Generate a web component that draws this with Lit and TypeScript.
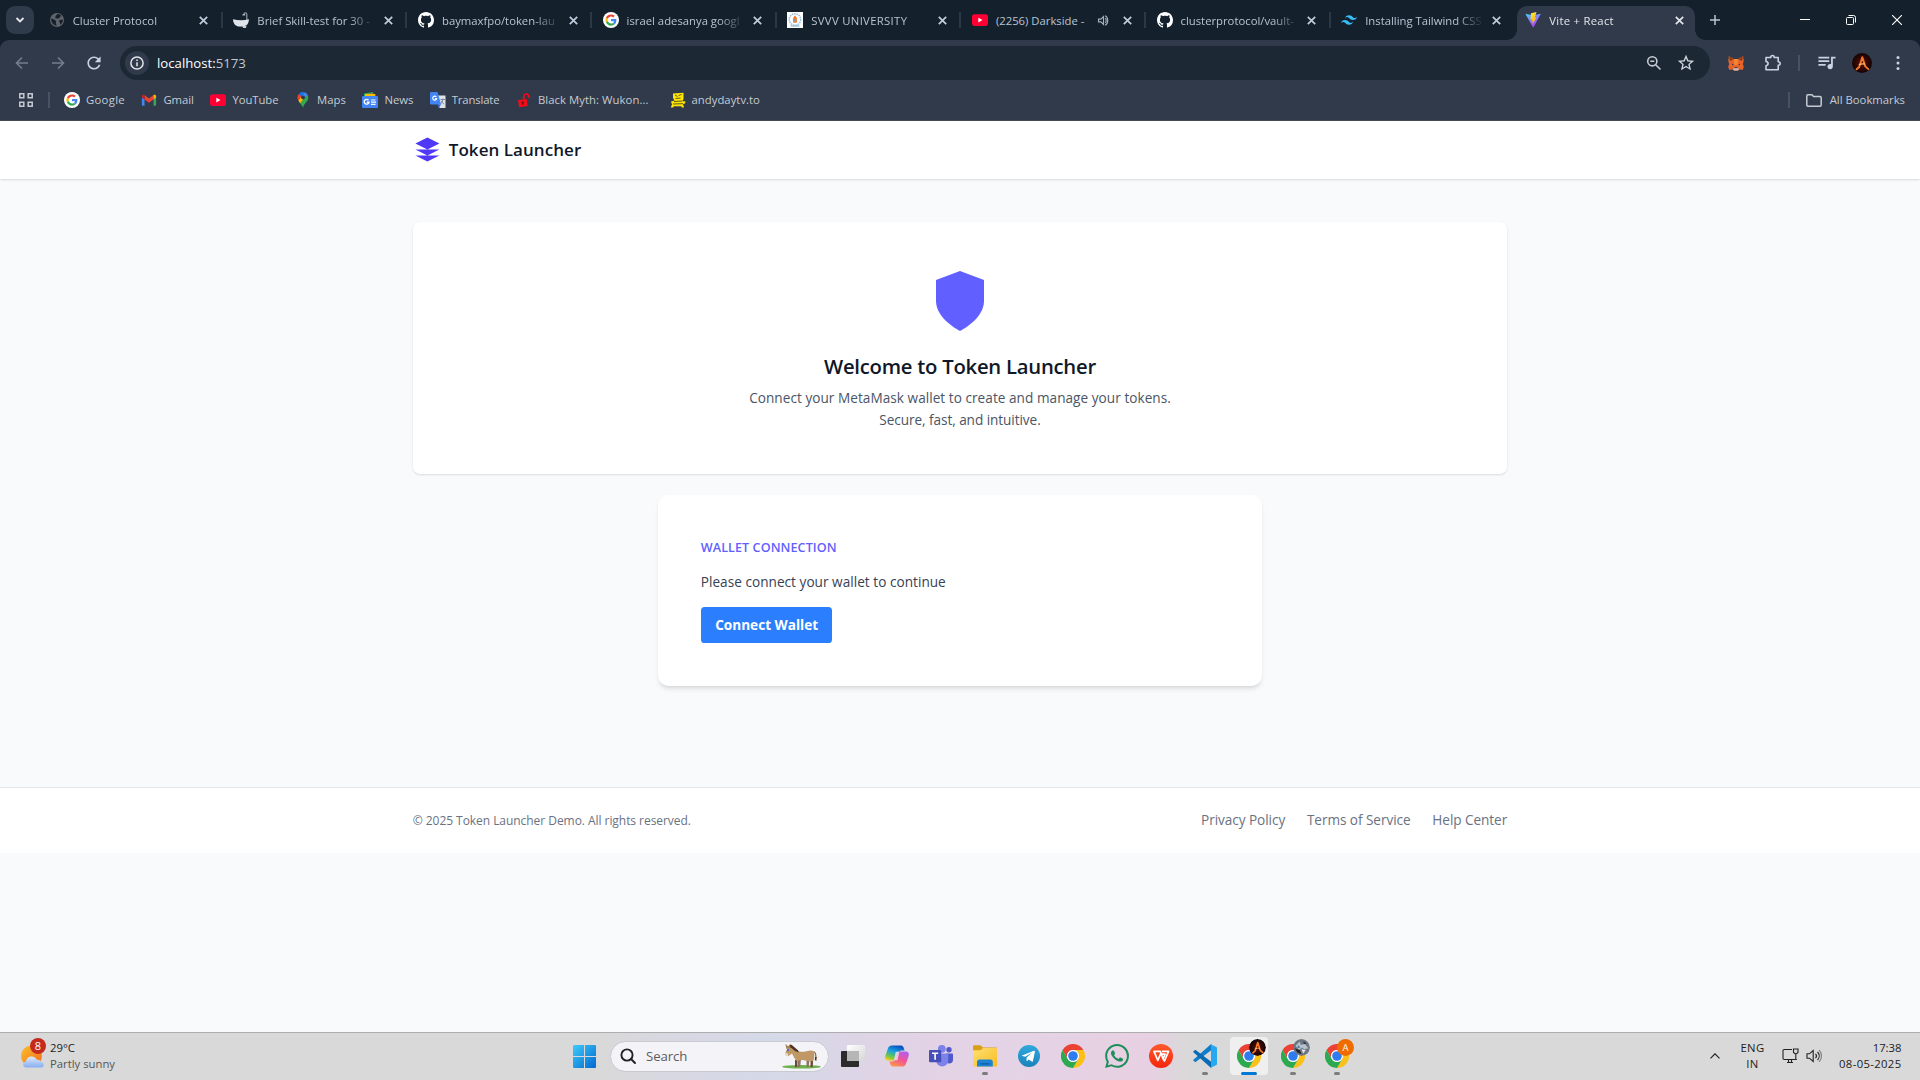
import { LitElement, html, css, nothing, TemplateResult } from "lit";
import { customElement } from "lit/decorators.js";

/* ---------- icons ---------- */

const googleG = html`
  <svg class="i16" viewBox="0 0 64 64">
    <circle cx="32" cy="32" r="32" fill="#fff" />
    <g transform="translate(9.5 9.5) scale(.94)">
      <path fill="#EA4335" d="M24 9.5c3.54 0 6.71 1.22 9.21 3.6l6.85-6.85C35.9 2.38 30.47 0 24 0 14.62 0 6.51 5.38 2.56 13.22l7.98 6.19C12.43 13.72 17.74 9.5 24 9.5z" />
      <path fill="#4285F4" d="M46.98 24.55c0-1.57-.15-3.09-.38-4.55H24v9.02h12.94c-.58 2.96-2.26 5.48-4.78 7.18l7.73 6c4.51-4.18 7.09-10.36 7.09-17.65z" />
      <path fill="#FBBC05" d="M10.53 28.59c-.48-1.45-.76-2.99-.76-4.59s.27-3.14.76-4.59l-7.98-6.19C.92 16.46 0 20.12 0 24c0 3.88.92 7.54 2.56 10.78l7.97-6.19z" />
      <path fill="#34A853" d="M24 48c6.48 0 11.93-2.13 15.89-5.81l-7.73-6c-2.15 1.45-4.92 2.3-8.16 2.3-6.26 0-11.57-4.22-13.47-9.91l-7.98 6.19C6.51 42.62 14.62 48 24 48z" />
    </g>
  </svg>`;

const github = html`
  <svg class="i16" viewBox="0 0 16 16">
    <path fill="#fff" d="M8 0C3.58 0 0 3.58 0 8c0 3.54 2.29 6.53 5.47 7.59.4.07.55-.17.55-.38 0-.19-.01-.82-.01-1.49-2.01.37-2.53-.49-2.69-.94-.09-.23-.48-.94-.82-1.13-.28-.15-.68-.52-.01-.53.63-.01 1.08.58 1.23.82.72 1.21 1.87.87 2.33.66.07-.52.28-.87.51-1.07-1.78-.2-3.64-.89-3.64-3.95 0-.87.31-1.59.82-2.15-.08-.2-.36-1.02.08-2.12 0 0 .67-.21 2.2.82.64-.18 1.32-.27 2-.27s1.36.09 2 .27c1.53-1.04 2.2-.82 2.2-.82.44 1.1.16 1.92.08 2.12.51.56.82 1.27.82 2.15 0 3.07-1.87 3.75-3.65 3.95.29.25.54.73.54 1.48 0 1.07-.01 1.93-.01 2.2 0 .21.15.46.55.38A8.01 8.01 0 0 0 16 8c0-4.42-3.58-8-8-8z" />
  </svg>`;

const youtube = html`
  <svg class="i16" viewBox="0 0 16 16">
    <rect y="2.3" width="16" height="11.6" rx="2.6" fill="#ff0033" />
    <path fill="#fff" d="M6.3 5.7v4.8L10.5 8.1z" />
  </svg>`;

const globe = html`
  <svg class="i16" viewBox="0 0 16 16">
    <circle cx="8" cy="8" r="7" fill="#5f6368" />
    <path fill="#14212d" d="M2.2 6.6l3.6 1.2 1.4 1.6-.4 1.6 1 2.6C4.600 13.6 2 10.900 2.200 6.600zM8.300 2.100c2 .1 3.300.8 4.200 1.900l-1.200.6-1.100 1.600-2.200.4-1.800-.6L6.600 4.200zM10 8.200l3.900-.6c0 2.200-.9 4-2.500 5.100l-.6-2.200z" />
  </svg>`;

const bathtub = html`
  <svg class="i16" viewBox="0 0 16 16">
    <path fill="none" stroke="#8b949e" stroke-width="1.300" d="M13.800 8.500V2.200A1.400 1.400 0 0 0 12.400.9c-1 0-1.500.6-1.500 1.600" />
    <path fill="#aab4be" d="M9.200 3.600h3.200l-.6-1.500h-2z" />
    <path fill="#dfe5ea" d="M0 7.200c5 1.300 11 1.300 16 0-.2 4.200-2.200 6.600-4.600 7H5.200C2 13.800.2 11.200 0 7.200z" />
    <path fill="#c4ccd4" d="M3.500 14h10l-.5 2H10l-.4-1.400H6z" />
  </svg>`;

const svvv = html`
  <svg class="i16" viewBox="0 0 16 16">
    <rect width="16" height="16" fill="#fff" />
    <circle cx="8" cy="7.500" r="5.700" fill="none" stroke="#8fbfe0" stroke-width="1.500" stroke-dasharray="1.500 .8" />
    <path fill="#f07a30" d="M8 3.200c2.200 2.300 2.600 4.800 1.600 7.600H6.400c-1-2.800-.6-5.300 1.600-7.600z" />
    <path fill="#7aa7c7" d="M3.500 13.400h9v1h-9zM6.800 7.500h2.400v2H6.800z" />
  </svg>`;

const tailwind = html`
  <svg class="i16" viewBox="2 2 20 20">
    <path fill="#38bdf8" d="M12 6c-2.670 0-4.330 1.330-5 4 1-1.330 2.170-1.830 3.500-1.500.76.19 1.310.74 1.910 1.350.98 1 2.090 2.150 4.590 2.150 2.670 0 4.330-1.330 5-4-1 1.330-2.170 1.830-3.500 1.500-.76-.19-1.300-.74-1.910-1.350C15.610 7.150 14.500 6 12 6zM7 12c-2.670 0-4.330 1.330-5 4 1-1.330 2.170-1.830 3.500-1.500.76.19 1.300.74 1.910 1.350C8.390 16.850 9.500 18 12 18c2.670 0 4.330-1.330 5-4-1 1.330-2.170 1.830-3.500 1.500-.76-.19-1.300-.74-1.910-1.350C10.610 13.150 9.500 12 7 12z" />
  </svg>`;

const vite = html`
  <svg class="i16" viewBox="0 0 16 16">
    <defs>
      <linearGradient id="va" x1="0" y1="0" x2=".6" y2="1"><stop stop-color="#41d1ff" /><stop offset="1" stop-color="#bd34fe" /></linearGradient>
      <linearGradient id="vb" x1=".4" y1="0" x2=".6" y2="1"><stop stop-color="#ffea83" /><stop offset=".1" stop-color="#ffdd35" /><stop offset="1" stop-color="#ffa800" /></linearGradient>
    </defs>
    <path fill="url(#va)" d="M.3 1.700L8.200 15.700 15.900 1.700 8 3.200z" />
    <path fill="url(#vb)" d="M11.500.1L6 1.200l-.5 6.500 1.700-.4-.6 2.500 1.400-.4-.8 3.100 4.400-7-1.900.3z" />
  </svg>`;

const gmail = html`
  <svg class="i16" viewBox="0 0 16 16">
    <path fill="#4285f4" d="M1 13.700h2.500V7.400L.9 5.500v7.300c0 .5.1.9.1.9z" />
    <path fill="#34a853" d="M12.500 13.700h1.700c.5 0 .9-.4.9-.9V5.500l-2.600 1.900z" />
    <path fill="#ea4335" d="M3.500 7.400V3.100L8 6.500l4.500-3.400v4.300L8 10.800z" />
    <path fill="#c5221f" d="M.9 4.300v1.200l2.600 1.900V3.100C2.300 2.200.9 2.900.9 4.300z" />
    <path fill="#fbbc04" d="M12.500 3.100v4.300l2.600-1.900V4.300c0-1.400-1.400-2.100-2.600-1.200z" />
  </svg>`;

const maps = html`
  <svg class="i16" viewBox="0 0 16 16">
    <path fill="#34a853" d="M8 16c.6-2.500 1.400-3.600 2.600-5 1.400-1.700 2.700-3.100 2.700-5.500 0-1-.3-1.900-.7-2.700L5 11.300C6.500 13 7.400 13.800 8 16z" />
    <path fill="#fbbc04" d="M3.400 8.400c.4.900 1 1.700 1.700 2.900l3-3.500-2-4z" />
    <path fill="#4285f4" d="M9.600.2a5.300 5.300 0 0 1 3 2.600L9.500 6.600 6.400 4z" />
    <path fill="#1a73e8" d="M3.900 1.900A5.300 5.300 0 0 1 9.600.2L6.200 4.400z" />
    <path fill="#ea4335" d="M3.900 1.900a5.300 5.300 0 0 0-.5 6.500l3-3.800z" />
    <circle cx="8" cy="5.400" r="1.900" fill="#303a4b" />
  </svg>`;

const news = html`
  <svg class="i16" viewBox="0 0 16 16">
    <path fill="#34a853" d="M2 1.500L11 0l1 5H2z" />
    <path fill="#ea4335" d="M9 .8l5 1.600-.8 3H8z" />
    <path fill="#fbbc04" d="M3 2h10v4H3z" />
    <rect y="4" width="16" height="12" rx="1.200" fill="#4285f4" />
    <path fill="none" stroke="#fff" stroke-width="1.400" d="M6.500 8.200A2.400 2.400 0 1 0 7 10.300H4.800" />
    <path fill="#fff" d="M9 7.400h4.500v1.200H9zm0 2.200h5v1.200H9zm0 2.200h4.500V13H9z" />
  </svg>`;

const translate = html`
  <svg class="i16" viewBox="0 0 16 16">
    <path fill="#dfe1e4" d="M7 3.500h8.500v12.500H9.500z" />
    <path fill="none" stroke="#7a8a99" d="M10.500 7.500h4.500M12.700 6.500v1c0 2-1 3.500-2 4.300M11.200 8.800c.7 1.500 1.800 2.600 3 3.400" />
    <path fill="#4285f4" d="M1.200 0h6.300l3.600 12.500H1.200A1.200 1.200 0 0 1 0 11.300V1.200C0 .5.5 0 1.200 0z" />
    <path fill="#3367d6" d="M7.500 12.500h3.600L8.500 16z" />
    <path fill="none" stroke="#fff" stroke-width="1.100" d="M6.300 4.900a2 2 0 1 0 .4 1.700H4.900" />
  </svg>`;

const lock = html`
  <svg class="i16" viewBox="0 0 16 16">
    <path fill="#f00c18" d="M2 8l8.800-1 .9 7L3 15.200z" />
    <path fill="none" stroke="#f00c18" stroke-width="1.700" d="M8.300 7.500C7 4.500 8 2.200 10 2s3 1.300 3.200 4" />
    <circle cx="6.700" cy="10.400" r="1" fill="#5a0a14" /><path stroke="#5a0a14" d="M6.700 10.500l.3 2.300" />
  </svg>`;

const chair = html`
  <svg class="i16" viewBox="0 0 16 16">
    <path fill="#ffe600" d="M3 1.500L13.500.8V7l-1 2 3 .5-.5 2-2 .5 1 3.500h-2l-.8-1.300H4L3.200 15.500H.7l1.300-3L1 9.500l3.500-1L3 6z" />
    <path fill="none" stroke="#4a4a20" stroke-width=".9" d="M5 3l2.500 1.500M8.500 3.500l3-1M5.500 6.500l5-.5M4 9.500l8.500-.5M3 12l10-.3" />
  </svg>`;

const closeX = html`<svg class="x" viewBox="0 0 9 9"><path d="M.8.8l7.400 7.400M8.200.800L.8 8.200" /></svg>`;

const speaker = html`
  <svg class="vol" viewBox="0 0 24 24">
    <path fill="none" stroke="currentColor" stroke-width="1.800" d="M4 9.800v4.400h3.800L12 18.300V5.700L7.800 9.800zM14.600 8.500c2.400 1.600 2.400 5.400 0 7M14.600 4.500c5.600 2.300 5.600 12.700 0 15" />
  </svg>`;

const lampA = html`<svg viewBox="0 0 20 20" class="fill">
  <defs><radialGradient id="lg"><stop stop-color="#5a0d06" /><stop offset="1" stop-color="#140304" /></radialGradient></defs>
  <circle cx="10" cy="10" r="10" fill="url(#lg)" />
  <path fill="none" stroke="#f4792b" stroke-width="1.900" stroke-linecap="round" stroke-linejoin="round" d="M4.600 16.300L7.200 14 10.300 4.200l3 9.200 3 2.700" />
  <path fill="none" stroke="#ffc266" stroke-width="1.100" d="M6.800 11.800c2-1 4-1.100 6-.7" />
</svg>`;

const fox = html`
  <svg class="fox" viewBox="0 0 16 16">
    <path fill="#e8632b" d="M.8 1l5 3h4.400l5-3 .5 5-.8 3 .9 3-1.200 3-3.300-.8L10 15.600H6L4.700 14.200l-3.300.8L.2 12l.9-3L.3 6z" />
    <path fill="#8a3a18" d="M.8 1l4.700 3.600L2 6zM15.200 1l-4.700 3.600L14 6z" />
    <path fill="#f58634" d="M5.800 4h4.400L9.500 10h-3z" />
    <path fill="#d5bfb2" d="M4.700 14.200L6.500 13h3l1.800 1.200L10 15.600H6z" />
    <path fill="#233447" d="M4 8.800l2 .8-1.600.6zM12 8.800l-2 .8 1.600.6zM6.800 12.200h2.400l.3 1h-3z" />
  </svg>`;

/* ---------- taskbar icons ---------- */

const chrome = html`
  <svg viewBox="0 0 48 48" class="fill">
    <path fill="#ea4335" d="M3.200 12a24 24 0 0 1 41.600 0H24A12 12 0 0 0 13.600 30z" />
    <path fill="#fbc116" d="M44.800 12A24 24 0 0 1 24 48l10.400-18A12 12 0 0 0 24 12z" />
    <path fill="#2da94f" d="M24 48A24 24 0 0 1 3.200 12l10.400 18a12 12 0 0 0 20.800 0z" />
    <circle cx="24" cy="24" r="12" fill="#fff" /><circle cx="24" cy="24" r="9.600" fill="#2f7cf0" />
  </svg>`;

const windows = html`
  <svg class="i23" viewBox="0 0 23 23">
    <defs><linearGradient id="wn" gradientUnits="userSpaceOnUse" x1="0" y1="0" x2="23" y2="23"><stop stop-color="#3fcbfb" /><stop offset="1" stop-color="#0168cf" /></linearGradient></defs>
    <path fill="url(#wn)" d="M.8 0H11v11H0V.8zM12 0h10.200l.8.8V11H12zM0 12h11v11H.8L0 22.200zM12 12h11v10.200l-.8.800H12z" />
  </svg>`;

const donkey = html`
  <svg class="donkey" viewBox="0 0 40 26">
    <ellipse cx="20.500" cy="23.800" rx="19.500" ry="1.800" fill="#6fb04c" />
    <path fill="#6b4a33" d="M14 17h2.600l-.4 7H14zM29.500 16h2.600l-.3 8h-2.200z" />
    <path fill="#8f7466" d="M17 16h3l-.8 8h-2.400zM25.500 16h3l-.8 8h-2.200z" />
    <path fill="#bf9866" d="M8 3l10 5.500c4 1 8-.5 12-1 2.500 0 3.500 2 3.400 5l-1 5.500-4 .2-7-1.200-5.600 1c-2.600-2.400-3.200-5-4.800-7.500L7 13.200l-2.400-1L4.500 9z" />
    <path fill="#a57f52" d="M5.500 6L4.300.8l3 2.800L9.300.4l1 4.400z" />
    <path fill="#4d3327" d="M8.500 2.500l2-.8 6.500 5.600 1 2.200-4-1.500-4.500-3.700z" />
    <path fill="none" stroke="#8a6843" stroke-width="1.200" d="M32.500 8.500c2.700 1 2.600 4 2.200 7" /><path fill="#4d3327" d="M34 14h1.700l-.4 4-1.500-1z" />
    <path fill="#e8d9c5" d="M4.500 9.500l2.600 1.200L7 13.300l-2.400-.6z" /><circle cx="7" cy="7.200" r="1.100" fill="#5060d0" />
  </svg>`;

const taskView = html`
  <svg class="i24" viewBox="0 0 24 24">
    <defs><linearGradient id="tv" x1="0" y1="0" x2="1" y2="1"><stop stop-color="#fff" /><stop offset="1" stop-color="#d6d6d6" /></linearGradient></defs>
    <rect x="0" y="7" width="18" height="16" rx="1" fill="#2b2c2b" /><rect x="6" y="1" width="18" height="16" rx="1" fill="url(#tv)" />
    <rect x="6" y="7" width="12" height="10" fill="#b5b6b5" />
  </svg>`;

const copilot = html`
  <svg class="i24" viewBox="0 0 24 24">
    <defs>
      <linearGradient id="ca" x1=".6" y1="0" x2=".2" y2="1"><stop stop-color="#0a4fc0" /><stop offset=".4" stop-color="#17a3e0" /><stop offset=".75" stop-color="#6fc74a" /><stop offset="1" stop-color="#f4cf1c" /></linearGradient>
      <linearGradient id="cb" x1=".8" y1="0" x2=".3" y2="1"><stop stop-color="#b060f0" /><stop offset=".5" stop-color="#f0559a" /><stop offset="1" stop-color="#ff9345" /></linearGradient>
    </defs>
    <path fill="url(#ca)" d="M7 1.400h9c1.500 0 2.300 1 2.800 2.800l.8 2.400h-3c-1.300 0-2 .7-2.400 2l-1.700 5.200c-.6 1.800-1.600 2.700-3.400 2.700H3.200C.5 16.500-.3 14.800.3 12L3 4.200C3.700 2.200 5 1.400 7 1.400z" />
    <path fill="url(#cb)" d="M17 22.600H8c-1.500 0-2.300-1-2.800-2.800l-.8-2.400h3c1.300 0 2-.7 2.400-2l1.700-5.200c.6-1.800 1.600-2.700 3.400-2.700h5.900c2.700 0 3.500 1.700 2.900 4.500L21 19.800c-.7 2-2 2.800-4 2.800z" />
    <path fill="#e8e4ee" d="M10.800 7.800h3.600l-2 8.400H8.800z" opacity=".85" />
  </svg>`;

const teams = html`
  <svg class="i24" viewBox="0 0 24 24">
    <circle cx="20" cy="5.800" r="2.700" fill="#5059c9" /><path fill="#5059c9" d="M17 9.500h6.200c.5 0 .8.300.8.800v5.700c0 2-1.700 3.500-3.700 3.500S17 18 17 16z" />
    <circle cx="12.800" cy="4.800" r="3.900" fill="#7b83eb" /><path fill="#7b83eb" d="M8 9.500h10.200c.6 0 1 .4 1 1v6a6 6 0 0 1-6 6 6 6 0 0 1-6-6z" />
    <rect y="6" width="12.200" height="12.200" rx="1" fill="#464eb8" /><path stroke="#fff" stroke-width="1.600" d="M3 9.200h6.200M6.100 9.200v6.600" />
  </svg>`;

const explorer = html`
  <svg class="i24" viewBox="0 0 24 24">
    <defs><linearGradient id="ex" x1="0" y1="0" x2="1" y2="1"><stop stop-color="#ffdf72" /><stop offset="1" stop-color="#f8bd23" /></linearGradient></defs>
    <path fill="#d8a017" d="M0 2.500C0 1.700.5 1.200 1.200 1.200h6.300L10 3.500h13c.6 0 1 .4 1 1V10H0z" />
    <path fill="url(#ex)" d="M0 6.300h7.700L10 4h13c.6 0 1 .4 1 1v16.500c0 .6-.4 1-1 1H1c-.6 0-1-.4-1-1z" />
    <path fill="#1d82d2" d="M4 22.500V18c0-1.600 1-2.500 2.500-2.500h10.800c1.500 0 2.500 1 2.500 2.500v4.500z" /><path fill="#0b5ea8" d="M7.500 19.200h9v1.300h-9z" />
  </svg>`;

const telegram = html`
  <svg class="i24" viewBox="0 0 24 24">
    <defs><linearGradient id="tg" x1="0" y1="0" x2="0" y2="1"><stop stop-color="#2fa9dd" /><stop offset="1" stop-color="#1b82bb" /></linearGradient></defs>
    <circle cx="12" cy="12" r="11" fill="url(#tg)" />
    <path fill="#fff" d="M5 11.600l12-4.800c.6-.2 1 .2.900.9l-2 9.500c-.1.600-.6.800-1.200.4l-3-2.200-1.500 1.500c-.4.300-.7.200-.7-.3l.1-3 5.600-5.200-7 4.400-3-.9c-.5-.1-.5-.2-.2-.3z" />
  </svg>`;

const whatsapp = html`
  <svg class="i24" viewBox="0 0 24 24"><path fill="#1e8e5a" d="M17.472 14.382c-.297-.149-1.758-.867-2.030-.967-.273-.099-.471-.148-.67.15-.197.297-.767.966-.94 1.164-.173.199-.347.223-.644.075-.297-.15-1.255-.463-2.390-1.475-.883-.788-1.480-1.761-1.653-2.059-.173-.297-.018-.458.13-.606.134-.133.298-.347.446-.52.149-.174.198-.298.298-.497.099-.198.05-.371-.025-.52-.075-.149-.669-1.612-.916-2.207-.242-.579-.487-.5-.669-.51-.173-.008-.371-.01-.57-.01-.198 0-.52.074-.792.372-.272.297-1.040 1.016-1.040 2.479 0 1.462 1.065 2.875 1.213 3.074.149.198 2.096 3.200 5.077 4.487.709.306 1.262.489 1.694.625.712.227 1.360.195 1.871.118.571-.085 1.758-.719 2.006-1.413.248-.694.248-1.289.173-1.413-.074-.124-.272-.198-.57-.347m-5.421 7.403h-.004a9.870 9.870 0 01-5.031-1.378l-.361-.214-3.741.982.998-3.648-.235-.374a9.860 9.860 0 01-1.510-5.260c.001-5.450 4.436-9.884 9.888-9.884 2.640 0 5.122 1.030 6.988 2.898a9.825 9.825 0 012.893 6.994c-.003 5.450-4.437 9.884-9.885 9.884m8.413-18.297A11.815 11.815 0 0012.050 0C5.495 0 .16 5.335.157 11.892c0 2.096.547 4.142 1.588 5.945L.057 24l6.305-1.654a11.882 11.882 0 005.683 1.448h.005c6.554 0 11.890-5.335 11.893-11.893a11.821 11.821 0 00-3.480-8.413z" /></svg>`;

const wps = html`
  <svg class="i24" viewBox="0 0 24 24">
    <defs><linearGradient id="wp" x1="0" y1="0" x2="0" y2="1"><stop stop-color="#ff5a2a" /><stop offset="1" stop-color="#f5240c" /></linearGradient></defs>
    <circle cx="12" cy="12" r="12" fill="url(#wp)" />
    <path fill="none" stroke="#fff" stroke-width="1.700" stroke-linejoin="round" d="M5 7.400h6.300l2.800 7.600 2-4.800h-4.600L8.800 16.400zM13 7.400h6.500L15.500 17l-1.400-2" />
  </svg>`;

const vscode = html`
  <svg class="i24" viewBox="0 0 24 24">
    <path fill="#0f7dc8" d="M.4 16.600l1.300 1.200c.4.300.9.300 1.300 0L18.500 6V.4c-.6-.1-1 .1-1.500.5L.4 15.700c-.3.3-.3.600 0 .9z" />
    <path fill="#0a6bb5" d="M.4 7.400l1.300-1.200c.4-.3.900-.3 1.300 0L18.500 18v5.600c-.6.100-1-.1-1.500-.5L.4 8.300c-.3-.3-.3-.6 0-.9z" />
    <path fill="#28a8f0" d="M17.500.2L23 2.700c.6.300 1 .8 1 1.500v15.600c0 .7-.4 1.200-1 1.500l-5.500 2.500c-.3.100.5-.3.500-1.500V1.700c0-1.200-.8-1.600-.5-1.500z" />
  </svg>`;

/* ---------- browser chrome ---------- */

interface Tab { title: string; icon: TemplateResult; audio?: boolean; track?: number }

const tabs: Tab[] = [
  { title: "Cluster Protocol", icon: globe },
  { title: "Brief Skill-test for 30 -", icon: bathtub },
  { title: "baymaxfpo/token-lau", icon: github },
  { title: "israel adesanya googl", icon: googleG },
  { title: "SVVV UNIVERSITY", icon: svvv, track: 0.33 },
  { title: "(2256) Darkside -", icon: youtube, audio: true },
  { title: "clusterprotocol/vault-", icon: github },
  { title: "Installing Tailwind CSS", icon: tailwind },
  { title: "Vite + React", icon: vite, track: 0.27 },
];

@customElement("browser-tabs")
class BrowserTabs extends LitElement {
  static styles = css`
    :host { display: flex; height: 40px; background: #14212d; padding-left: 6px; color: #b9c3d3; font-size: 11.3px; }
    .menu { width: 28px; height: 28px; margin: 6px 4.200px 0 0; border-radius: 9px; background: #2f3b4b; display: grid; place-items: center; }
    .menu svg { width: 10px; height: 6px; }
    .tab { flex: none; width: 184.650px; box-sizing: border-box; display: flex; align-items: center; padding: 0 12.500px 0 10.500px; border-right: 2px solid transparent;
      background: linear-gradient(#2b3847, #2b3847) right center / 2px 16px no-repeat; background-origin: border-box; }
    .tab.last { background: none; }
    .i16 { width: 16px; height: 16px; flex: none; }
    .title { flex: 1; margin-left: 8px; white-space: nowrap; line-height: 20px; position: relative; top: .5px; }
    .fade { -webkit-mask-image: linear-gradient(90deg, #000 92px, transparent 119px); }
    .vol { width: 15px; height: 15px; margin-right: 4px; flex: none; color: #a9b0b8; }
    .x { width: 9px; height: 9px; margin-left: 8px; flex: none; }
    .x path { stroke: #c3cddd; stroke-width: 1.700; fill: none; }
    .active { position: relative; margin: 6px 0 0 2px; width: 178px; height: 34px; background: #303a4b; border: 0; border-radius: 10px 10px 0 0; color: #e3e6ea; padding: 0 11.300px 6px 8px; }
    .active .x path { stroke: #e3e6ea; }
    .active::before, .active::after { content: ""; position: absolute; bottom: 0; width: 10px; height: 10px; }
    .active::before { left: -10px; background: radial-gradient(circle at 0 0, transparent 9.500px, #303a4b 10px); }
    .active::after { right: -10px; background: radial-gradient(circle at 100% 0, transparent 9.500px, #303a4b 10px); }
    .plus { width: 10px; height: 10px; margin: 15px 0 0 15px; }
    .win { margin-left: auto; display: flex; align-items: center; padding: 0 18px 0 0; gap: 36px; }
    .win svg { width: 10px; height: 10px; }
    .win path, .win rect { fill: none; stroke: #fff; }
  `;
  render() {
    return html`
      <div class="menu"><svg viewBox="0 0 10 6"><path d="M1.500 1L5 4.500 8.500 1" fill="none" stroke="#e3e6ea" stroke-width="1.800" /></svg></div>
      ${tabs.map((t, i) => html`
        <div class="tab ${i === 8 ? "active" : ""} ${i === 7 ? "last" : ""}">
          ${t.icon}<span class="title ${t.audio ? "" : "fade"}" style="letter-spacing:${t.track ?? 0}px">${t.title}</span>
          ${t.audio ? speaker : nothing}${closeX}
        </div>`)}
      <svg class="plus" viewBox="0 0 10 10"><path d="M5 0v10M0 5h10" stroke="#b9c3d3" stroke-width="1.500" /></svg>
      <div class="win">
        <svg viewBox="0 0 10 10"><path d="M0 4.500h10" /></svg>
        <svg viewBox="0 0 10 10"><rect x=".5" y="2.500" width="7" height="7" rx="1" /><path d="M2.500.5h5a2 2 0 0 1 2 2v5" /></svg>
        <svg viewBox="0 0 10 10"><path d="M0 0l10 10M10 0L0 10" stroke-width="1.100" /></svg>
      </div>`;
  }
}

const bookmarks: [string, TemplateResult, number][] = [
  ["Google", googleG, 0.3],
  ["Gmail", gmail, -0.03],
  ["YouTube", youtube, -0.06],
  ["Maps", maps, 0.06],
  ["News", news, -0.06],
  ["Translate", translate, -0.13],
  ["Black Myth: Wukon...", lock, 0.06],
  ["andydaytv.to", chair, 0.03],
];

@customElement("browser-toolbar")
class BrowserToolbar extends LitElement {
  static styles = css`
    :host { display: block; background: #14212d; color: #c6cbd3; }
    .wrap { background: #303a4b; border-radius: 9px 9px 0 0; height: 80px; border-bottom: 1px solid #474b55; }
    .bar { display: flex; align-items: center; height: 46px; padding: 0 15px; }
    .nav { display: flex; gap: 22px; width: 105px; }
    .nav svg { width: 14px; height: 14px; }
    .omni { flex: none; width: 1590px; height: 34px; box-sizing: border-box; border-radius: 17px; background: #1c2834; display: flex; align-items: center; padding: 0 15px 0 5px; }
    .info { width: 24px; height: 24px; border-radius: 50%; background: #303a4b; display: grid; place-items: center; margin-right: 8px; }
    .info svg { width: 14px; height: 14px; }
    .url { font-size: 13.200px; color: #c3c9d1; }
    .url b { font-weight: 400; color: #fff; }
    .omni .zoom { margin-left: auto; width: 16px; height: 16px; margin-right: 15px; }
    .omni .star { width: 18px; height: 18px; }
    .fox { width: 16px; height: 16px; margin-left: 18px; }
    .puzzle { width: 18px; height: 18px; margin-left: 20px; }
    .sep { width: 2px; height: 16px; background: #475262; margin-left: 16px; }
    .queue { width: 18px; height: 18px; margin-left: 18px; }
    .avatar { width: 20px; height: 20px; margin-left: 16px; }
    .fill { width: 100%; height: 100%; display: block; }
    .kebab { width: 4px; height: 14px; margin-left: 24px; }
    .marks { display: flex; align-items: center; height: 34px; padding: 0 15px 6px 19px; font-size: 11.300px; line-height: 16px; box-sizing: border-box; }
    .bm { display: flex; align-items: center; gap: 6px; margin-right: 16.500px; white-space: nowrap; }
    .bm:nth-of-type(7) { margin-right: 21px; }
    .i16 { width: 16px; height: 16px; }
    .apps { width: 14px; height: 14px; }
    .marks .sep { margin: 0 14px 0 15px; }
    .all { margin-left: auto; display: flex; align-items: center; }
    .all .sep { margin: 0 16px 0 0; }
    .all svg { width: 16px; height: 13px; margin-right: 8px; }
  `;
  render() {
    return html`
      <div class="wrap">
        <div class="bar">
          <div class="nav">
            <svg viewBox="0 0 14 14"><path d="M13 7H2M7 1.500L1.500 7 7 12.500" fill="none" stroke="#747d8b" stroke-width="1.600" /></svg>
            <svg viewBox="0 0 14 14"><path d="M1 7h11M7 1.500L12.500 7 7 12.500" fill="none" stroke="#747d8b" stroke-width="1.600" /></svg>
            <svg viewBox="3.500 3.500 17 17"><path fill="#c9d3e2" d="M17.650 6.350C16.200 4.900 14.210 4 12 4c-4.420 0-7.990 3.580-7.990 8s3.570 8 7.990 8c3.730 0 6.840-2.550 7.730-6h-2.080c-.82 2.330-3.040 4-5.650 4-3.310 0-6-2.690-6-6s2.690-6 6-6c1.660 0 3.140.69 4.220 1.780L13 11h7V4l-2.350 2.350z" /></svg>
          </div>
          <div class="omni">
            <div class="info"><svg viewBox="0 0 14 14"><circle cx="7" cy="7" r="6.100" fill="none" stroke="#e3e6ea" stroke-width="1.500" /><path d="M7 6.200v4M7 3.600v1.500" stroke="#e3e6ea" stroke-width="1.500" /></svg></div>
            <span class="url"><b>localhost:</b>5173</span>
            <svg class="zoom" viewBox="0 0 16 16"><g fill="none" stroke="#c6cbd3" stroke-width="1.600"><circle cx="6.300" cy="6.300" r="4.600" /><path d="M9.700 9.700l4.800 4.800M4.300 6.300h4" /></g></svg>
            <svg class="star" viewBox="1 1 22 22"><path fill="#d3d7dd" d="M22 9.240l-7.190-.62L12 2 9.190 8.630 2 9.240l5.460 4.730L5.820 21 12 17.270 18.180 21l-1.630-7.030L22 9.240zM12 15.400l-3.760 2.270 1-4.280-3.320-2.880 4.380-.38L12 6.100l1.710 4.040 4.380.38-3.320 2.880 1 4.280L12 15.400z" /></svg>
          </div>
          ${fox}
          <svg class="puzzle" viewBox="0 0 18 18"><path fill="none" stroke="#c9d3e2" stroke-width="1.600" stroke-linejoin="round" d="M2 3.500h4.800c0-2.600 3.400-2.600 3.400 0h4v4.300c2.600 0 2.600 3.400 0 3.400v4.500H2v-4c2.800-.4 2.800-3.800 0-4.200z" /></svg>
          <div class="sep"></div>
          <svg class="queue" viewBox="2.500 3 20 20"><path fill="#c9d3e2" d="M15 6H3v2h12V6zm0 4H3v2h12v-2zM3 16h8v-2H3v2zM17 6v8.180c-.31-.11-.65-.18-1-.18-1.660 0-3 1.340-3 3s1.340 3 3 3 3-1.340 3-3V8h3V6h-5z" /></svg>
          <div class="avatar">${lampA}</div>
          <svg class="kebab" viewBox="0 0 4 14"><g fill="#c9d3e2"><circle cx="2" cy="1.600" r="1.500" /><circle cx="2" cy="7" r="1.500" /><circle cx="2" cy="12.400" r="1.500" /></g></svg>
        </div>
        <div class="marks">
          <svg class="apps" viewBox="0 0 14 14"><path fill="none" stroke="#c6cbd3" stroke-width="1.500" d="M.8.800h4v4h-4zM9.200.8h4v4h-4zM.8 9.200h4v4h-4zM9.200 9.200h4v4h-4z" /></svg>
          <div class="sep"></div>
          ${bookmarks.map(([t, icon, track]) => html`<span class="bm">${icon}<span style="letter-spacing:${track}px">${t}</span></span>`)}
          <div class="all"><div class="sep"></div>
            <svg viewBox="0 0 16 13"><path fill="none" stroke="#c6cbd3" stroke-width="1.500" stroke-linejoin="round" d="M.8 11V2c0-.8.4-1.200 1.200-1.200h4L7.500 2.500H14c.8 0 1.200.4 1.200 1.200V11c0 .8-.4 1.200-1.200 1.200H2c-.8 0-1.200-.4-1.200-1.200z" /></svg>
            <span>All Bookmarks</span></div>
        </div>
      </div>`;
  }
}

/* ---------- web page ---------- */

@customElement("launcher-page")
class LauncherPage extends LitElement {
  static styles = css`
    :host { display: block; height: 911px; background: #f9fafb; font-size: 13.600px; line-height: 21.600px; color: #4a5565; }
    .box { width: 1094.400px; margin: 0 auto; }
    header { background: #fff; height: 58px; box-shadow: 0 1px 2.700px rgba(0,0,0,.1), 0 1px 1.800px -1px rgba(0,0,0,.1); }
    header .box { display: flex; align-items: center; height: 57px; gap: 7.200px; }
    header svg { width: 28.800px; height: 28.800px; fill: #4f39f6; }
    .logo { font-size: 17px; font-weight: 600; letter-spacing: .05px; color: #101828; }
    main { padding-top: 43.200px; height: 608px; box-sizing: border-box; }
    .hero { background: #fff; border-radius: 7.200px; box-shadow: 0 1px 2.700px rgba(0,0,0,.1), 0 1px 1.800px -1px rgba(0,0,0,.1); box-sizing: border-box; padding: 43.200px 0; text-align: center; height: 252px; }
    .hero svg { width: 72px; height: 72px; display: block; margin: 0 auto 14.400px; fill: #615fff; }
    h1 { margin: 0 0 6.200px; font-size: 20.300px; font-weight: 600; line-height: 28.800px; color: #101828; letter-spacing: -.25px; }
    p { margin: 0; }
    .hero p { letter-spacing: .04px; }
    .hero p + p { letter-spacing: -.06px; margin-top: 1px; }
    .card { background: #fff; width: 604.800px; height: 191px; box-sizing: border-box; margin: 20.900px auto 0; padding: 44.400px 43.200px 0; border-radius: 10.800px; box-shadow: 0 3.600px 5.400px -1px rgba(0,0,0,.1), 0 1.800px 3.600px -2px rgba(0,0,0,.1); }
    h2 { margin: 0; font-size: 12.600px; line-height: 18px; font-weight: 600; letter-spacing: .07px; color: #615fff; }
    .card p { margin: 13.900px 0 14.400px; color: #364153; letter-spacing: .03px; }
    .btn { display: block; border: 0; border-radius: 3.600px; background: #2b7fff; color: #fff; font: 700 13.600px/21.600px "Open Sans", "Noto Sans", sans-serif; padding: 6.700px 13.800px 7.700px 14.400px; }
    footer { background: #fff; border-top: 1px solid #e3e5e8; height: 65px; }
    footer .box { display: flex; justify-content: space-between; align-items: center; height: 65px; color: #6a7282; }
    .copy { font-size: 12px; letter-spacing: -.05px; }
    nav { display: flex; gap: 21.800px; letter-spacing: -.06px; padding-bottom: 1px; }
  `;
  render() {
    return html`
      <header><div class="box">
        <svg viewBox="0 0 24 24"><path d="M12 2L2 7l10 5 10-5-10-5zM2 17l10 5 10-5M2 12l10 5 10-5" /></svg>
        <span class="logo">Token Launcher</span>
      </div></header>
      <main>
        <section class="box hero">
          <svg viewBox="0 0 24 24"><path d="M12 22s8-4 8-10V5l-8-3-8 3v7c0 6 8 10 8 10z" /></svg>
          <h1>Welcome to Token Launcher</h1>
          <p>Connect your MetaMask wallet to create and manage your tokens.</p>
          <p>Secure, fast, and intuitive.</p>
        </section>
        <section class="card">
          <h2>WALLET CONNECTION</h2>
          <p>Please connect your wallet to continue</p>
          <button class="btn">Connect Wallet</button>
        </section>
      </main>
      <footer><div class="box">
        <span class="copy">© 2025 Token Launcher Demo. All rights reserved.</span>
        <nav><span>Privacy Policy</span><span>Terms of Service</span><span>Help Center</span></nav>
      </div></footer>`;
  }
}

/* ---------- taskbar ---------- */

interface App { icon: TemplateResult; state?: "open" | "active"; badge?: TemplateResult; }

const cat = html`<svg viewBox="0 0 20 20" class="fill"><circle cx="10" cy="10" r="10" fill="#6d7682" /><path fill="#b9c2cc" d="M3 8l5-5 1 4 5-1 4 5-5 1-2-2-4 3z" /><path fill="#22262c" d="M2 11l6 2 2 5-5-2zM12 3l4 2-3 1z" /><path fill="#dfe5ea" d="M10 12l5 1-3 4z" /><path fill="#4f7fb0" d="M6 7l3 3-4 1z" /></svg>`;
const letterA = html`<span class="letter">A</span>`;

const apps: App[] = [
  { icon: taskView }, { icon: copilot }, { icon: teams }, { icon: explorer, state: "open" },
  { icon: telegram }, { icon: chrome }, { icon: whatsapp }, { icon: wps }, { icon: vscode, state: "open" },
  { icon: chrome, state: "active", badge: lampA },
  { icon: chrome, state: "open", badge: cat },
  { icon: chrome, state: "open", badge: letterA },
];

@customElement("task-bar")
class TaskBar extends LitElement {
  static styles = css`
    :host { display: grid; grid-template-columns: 1fr auto 1fr; height: 48px; box-sizing: border-box; border-top: 1px solid #adadad; font-size: 11.300px; color: #1c1c1c;
      background: linear-gradient(90deg, #d9d9d9 600px, #d7d8e4 690px, #d5d9e8 780px, #dcd5e6 850px, #e4d2e5 940px, #e4d3e6 1000px, #e7d0e2 1150px, #dbd7da 1180px, #d9d9d9 1200px); }
    .weather { display: flex; padding-left: 20px; }
    .wicon { position: relative; width: 24px; height: 24px; margin-top: 12px; }
    .wicon svg { width: 24px; height: 24px; display: block; }
    .num { position: absolute; left: 10px; top: -7px; width: 16px; height: 16px; border-radius: 50%; background: #c42b1c; color: #fff; text-align: center; line-height: 16px; font-size: 11px; }
    .wtext { margin: 7px 0 0 6px; line-height: 16px; }
    .wtext div + div { color: #555; }
    .center { display: flex; height: 46px; align-items: center; }
    .start { width: 45px; padding-left: 1px; box-sizing: border-box; display: grid; place-items: center; }
    .i23 { width: 23px; height: 23px; }
    .search { width: 219px; height: 31px; margin: 0 1.500px 0 3.500px; box-sizing: border-box; border-radius: 16px; background: #f4f3f8; border: 1px solid #c9c9d0; display: flex; align-items: center; padding: 0 7px 0 9px; }
    .mag { width: 16px; height: 16px; }
    .ph { font-size: 13.200px; color: #5c5c5c; margin-left: 10px; letter-spacing: -.1px; }
    .donkey { width: 40px; height: 26px; margin-left: auto; }
    .app { width: 44px; height: 46px; position: relative; display: grid; place-items: center; }
    .i24, .ic { width: 24px; height: 24px; display: block; }
    .fill { width: 100%; height: 100%; display: block; }
    .app > * { z-index: 1; }
    .active::before { content: ""; position: absolute; left: 3px; top: 4px; width: 38px; height: 38px; border-radius: 4px; background: #efefef; }
    .mark { position: absolute; bottom: 4px; left: 19px; width: 6px; height: 3px; border-radius: 2px; background: #7c7c7c; }
    .active .mark { left: 14px; width: 16px; background: #0078d4; }
    .badge { position: absolute; left: 22.500px; top: 6px; width: 17px; height: 17px; border-radius: 50%; overflow: hidden; }
    .letter { display: block; width: 17px; height: 17px; line-height: 17px; background: #ef6c00; color: #fff; text-align: center; font-size: 9.500px; }
    .tray { display: flex; justify-content: flex-end; align-items: center; padding: 0 18.500px 1px 0; text-align: right; line-height: 16px; }
    .chev { width: 10px; height: 6px; }
    .lang { width: 40px; margin-left: 13px; text-align: center; letter-spacing: .3px; }
    .mon { width: 17px; height: 16px; margin-left: 9px; }
    .spk { width: 16px; height: 16px; margin-left: 7px; }
    .clock { margin-left: 17px; width: 63px; }
    .date { letter-spacing: .35px; }
  `;
  render() {
    return html`
      <div class="weather">
        <div class="wicon">
          <svg viewBox="0 0 24 24">
            <defs><linearGradient id="sun" x1="0" y1="0" x2="1" y2="1"><stop stop-color="#fbc02d" /><stop offset="1" stop-color="#f26a1b" /></linearGradient>
              <linearGradient id="cld" x1="0" y1="0" x2="0" y2="1"><stop stop-color="#dcebfc" /><stop offset="1" stop-color="#86aef0" /></linearGradient></defs>
            <circle cx="11.500" cy="11" r="10.500" fill="url(#sun)" />
            <path fill="url(#cld)" d="M6.500 22.500c-4.500 0-4.500-5.500-.6-5.800.6-6.200 9.200-7 11-1.600 2-.9 4 .3 4 2 4.300.5 3.600 5.400.2 5.400z" />
          </svg>
          <span class="num">8</span>
        </div>
        <div class="wtext"><div>29°C</div><div>Partly sunny</div></div>
      </div>
      <div class="center">
        <div class="start">${windows}</div>
        <div class="search">
          <svg class="mag" viewBox="0 0 16 16"><g fill="none" stroke="#222" stroke-width="1.900"><circle cx="7" cy="7" r="5.600" /><path d="M11 11l4 4" stroke-linecap="round" /></g></svg>
          <span class="ph">Search</span>${donkey}
        </div>
        ${apps.map((a) => html`
          <div class="app ${a.state ?? ""}"><span class="ic">${a.icon}</span>
            ${a.badge ? html`<span class="badge">${a.badge}</span>` : nothing}
            ${a.state ? html`<span class="mark"></span>` : nothing}
          </div>`)}
      </div>
      <div class="tray">
        <svg class="chev" viewBox="0 0 10 6"><path d="M.5 5.300L5 .8l4.500 4.500" fill="none" stroke="#222" stroke-width="1.200" /></svg>
        <div class="lang">ENG<br />IN</div>
        <svg class="mon" viewBox="0 0 17 16"><g fill="none" stroke="#222" stroke-width="1.100"><path d="M10 1.500H2.200c-.8 0-1.200.4-1.200 1.200v7.600c0 .8.400 1.200 1.200 1.200h12.600M5 14.500h6M6.500 11.500v3M9.500 11.500v3M11.500 1h4.500v3.500l-2.200 1.700-2.300-1.700zM13.800 6.200v5.300" /></g></svg>
        <svg class="spk" viewBox="0 0 16 16"><g fill="none" stroke="#222" stroke-width="1.100"><path d="M1 5.800v4.400h2.500L7.200 13.500v-11L3.500 5.800zM9.500 5.800c1.200 1.300 1.200 3.100 0 4.400M11.500 4c2.200 2.300 2.200 5.700 0 8" /><path d="M13.200 2.200c3 3.300 3 8.300 0 11.600" opacity=".5" /></g></svg>
        <div class="clock"><div>17:38</div><div class="date">08-05-2025</div></div>
      </div>`;
  }
}

@customElement("app-root")
export class AppRoot extends LitElement {
  static styles = css`
    :host { display: flex; flex-direction: column; width: 1920px; height: 1080px; overflow: hidden; font-family: "Open Sans", "Noto Sans", sans-serif; }
  `;
  render() {
    return html`<browser-tabs></browser-tabs><browser-toolbar></browser-toolbar><launcher-page></launcher-page><task-bar></task-bar>`;
  }
}
